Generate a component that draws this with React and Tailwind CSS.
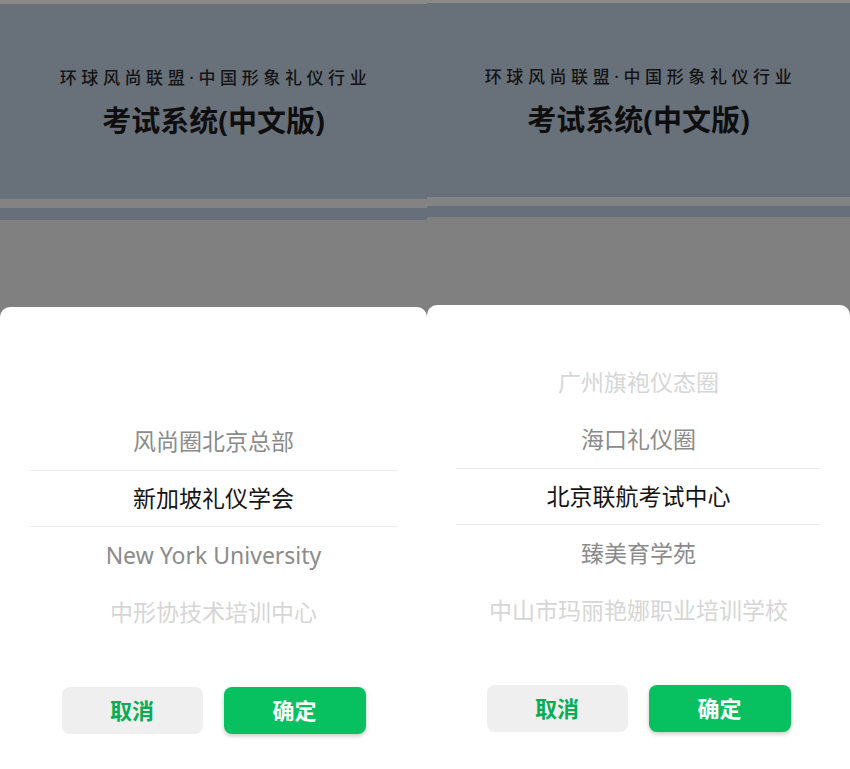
import React from 'react';

const panels = [
    {
        width: 'w-[427px]',
        strip: 'h-[4px]',
        head: 'h-[195px]',
        band: 'h-[9px]',
        band2: 'h-[12px]',
        gap: 'h-[87px]',
        rows: ['', '风尚圈北京总部', '新加坡礼仪学会', 'New York University', '中形协技术培训中心'],
    },
    {
        width: 'w-[423px]',
        strip: 'h-[3px]',
        head: 'h-[194px]',
        band: 'h-[9px]',
        band2: 'h-[11px]',
        gap: 'h-[88px]',
        rows: ['广州旗袍仪态圈', '海口礼仪圈', '北京联航考试中心', '臻美育学苑', '中山市玛丽艳娜职业培训学校'],
    },
];

// distance from the selected row -> text colour
const rowColor = ['text-[#151515]', 'text-[#8b8b8b]', 'text-[#d6d6d6]'];

const Picker = ({ rows }) => (
    <div className="flex flex-col">
        {rows.map((label, i) => {
            const dist = Math.abs(i - 2);
            const selected = dist === 0;
            return (
                <div
                    key={i}
                    className={`h-[57px] flex items-center justify-center ${selected ? 'mx-[29px] border-y border-[#ececec]' : ''}`}
                >
                    <span className={`text-[23px] leading-none whitespace-nowrap ${rowColor[dist]}`}>{label}</span>
                </div>
            );
        })}
    </div>
);

const Panel = ({ panel }) => (
    <div className={`${panel.width} h-[769px] flex flex-col bg-[#808080]`}>
        <div className={`${panel.strip} bg-[#8a8a87]`} />
        <div className={`${panel.head} bg-[#68707a] flex flex-col items-center pt-[59px]`}>
            <p className="text-[17px] leading-[30px] tracking-[4.6px] pl-[4px] font-medium text-[#141414]">环球风尚联盟·中国形象礼仪行业</p>
            <h1 className="mt-[12px] text-[29px] leading-[32px] font-bold text-[#0e0e0e]">考试系统(中文版)</h1>
        </div>
        <div className={`${panel.band} bg-[#838383]`} />
        <div className={`${panel.band2} bg-[#67707a]`} />
        <div className={panel.gap} />
        <div className="flex-1 bg-white rounded-t-[10px] pt-[49px] flex flex-col">
            <Picker rows={panel.rows} />
            <div className="mt-[46px] flex justify-center gap-[21px]">
                <button
                    type="button"
                    className="w-[141px] h-[47px] rounded-[8px] bg-[#efefef] text-[#07ad55] text-[22px] font-bold"
                >
                    取消
                </button>
                <button
                    type="button"
                    className="w-[142px] h-[47px] rounded-[8px] bg-[#07c160] text-white text-[22px] font-bold shadow-[0_2px_4px_rgba(0,0,0,0.22)]"
                >
                    确定
                </button>
            </div>
        </div>
    </div>
);

const App = () => {
    return (
        <div
            className="w-[850px] h-[769px] flex overflow-hidden bg-[#808080]"
            style={{ fontFamily: '"Noto Sans", "Noto Sans CJK SC", sans-serif' }}
        >
            {panels.map((panel, i) => (
                <Panel key={i} panel={panel} />
            ))}
        </div>
    );
};

export default App;
